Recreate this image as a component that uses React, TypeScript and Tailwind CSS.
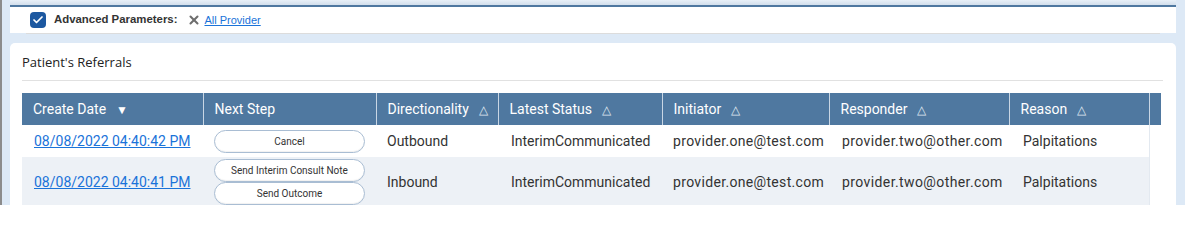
import { Check, X } from 'lucide-react'

const columns = [
  { label: 'Create Date', sort: '▼', width: 181 },
  { label: 'Next Step', sort: '', width: 173 },
  { label: 'Directionality', sort: '△', width: 122 },
  { label: 'Latest Status', sort: '△', width: 164 },
  { label: 'Initiator', sort: '△', width: 167 },
  { label: 'Responder', sort: '△', width: 180 },
  { label: 'Reason', sort: '△', width: 140 },
]

const rows = [
  {
    date: '08/08/2022 04:40:42 PM',
    actions: ['Cancel'],
    direction: 'Outbound',
    status: 'InterimCommunicated',
    initiator: 'provider.one@test.com',
    responder: 'provider.two@other.com',
    reason: 'Palpitations',
  },
  {
    date: '08/08/2022 04:40:41 PM',
    actions: ['Send Interim Consult Note', 'Send Outcome'],
    direction: 'Inbound',
    status: 'InterimCommunicated',
    initiator: 'provider.one@test.com',
    responder: 'provider.two@other.com',
    reason: 'Palpitations',
  },
]

function ActionButton({ label }: { label: string }) {
  return (
    <button className="w-[151px] h-[23px] rounded-full border border-[#a9bdd3] bg-white text-[10px] text-[#333] shadow-[inset_0_-1px_1px_rgba(0,0,0,0.06)]">
      {label}
    </button>
  )
}

export default function App() {
  return (
    <div className="w-[1185px] h-[205px] overflow-hidden bg-[#dde9f6] border-l-2 border-[#8c8c8c] font-['Roboto',sans-serif]">
      <div className="ml-[8px] w-[1166px]">
        {/* Advanced parameters bar */}
        <div className="h-[5px] bg-gradient-to-b from-[#e9f0f8] to-[#d2dfec]" />
        <div className="bg-white border-t-2 border-[#4f78a0] h-[28px] flex items-center pl-[20px] font-['Liberation_Sans',Arial,sans-serif]">
          <span className="w-4 h-4 rounded-[4px] bg-[#1c58a0] flex items-center justify-center">
            <Check className="w-3 h-3 text-white" strokeWidth={3.5} />
          </span>
          <span className="ml-[8px] text-[11.4px] font-bold text-[#333]">Advanced Parameters:</span>
          <X className="ml-[10px] w-[14px] h-[14px] text-[#6e6e6e]" strokeWidth={3.5} />
          <a className="ml-[3px] text-[11px] text-[#1a73d9] underline" href="#">
            All Provider
          </a>
        </div>
        <div className="h-[1px] mx-[16px] bg-[#dcdcdc]" />

        {/* Referrals card */}
        <div className="mt-[9px] bg-white rounded-[5px] pl-[12px] pr-[15px] pb-2">
          <div className="h-[37px] flex items-end pb-[8px] text-[13px] text-[#222] font-['Open_Sans',sans-serif]">
            Patient's Referrals
          </div>
          <div className="h-[1px] bg-[#e1e1e1] mr-[-2px]" />
          <table className="mt-[12px] table-fixed border-collapse w-[1139px] text-[14px]">
            <colgroup>
              {columns.map((c) => (
                <col key={c.label} style={{ width: c.width }} />
              ))}
              <col style={{ width: 12 }} />
            </colgroup>
            <thead>
              <tr className="h-[32px] bg-[#4f78a0] text-white">
                {columns.map((c) => (
                  <th
                    key={c.label}
                    className="text-left font-normal pl-[11px] border-r border-[#c9d6e4] whitespace-nowrap"
                  >
                    {c.label}
                    {c.sort && (
                      <span className={c.sort === '▼' ? 'ml-[10px] text-[12px]' : 'ml-[10px] text-[12px] text-[#dfe7f0]'}>
                        {c.sort}
                      </span>
                    )}
                  </th>
                ))}
                <th />
              </tr>
            </thead>
            <tbody className="text-[#333]">
              {rows.map((r, i) => (
                <tr key={r.date} className={i % 2 === 0 ? 'h-[32px] bg-white' : 'h-[50px] bg-[#edf1f6]'}>
                  <td className="pl-[12px] pt-[1px]">
                    <a href="#" className="text-[#1a73d9] underline">
                      {r.date}
                    </a>
                  </td>
                  <td className="pl-[11px] py-[1px]">
                    <div className="flex flex-col">
                      {r.actions.map((a) => (
                        <ActionButton key={a} label={a} />
                      ))}
                    </div>
                  </td>
                  <td className="pl-[11px] pt-[1px]">{r.direction}</td>
                  <td className="pl-[13px] pt-[1px]">{r.status}</td>
                  <td className="pl-[11px] pt-[1px] tracking-[0.33px]">{r.initiator}</td>
                  <td className="pl-[13px] pt-[1px] tracking-[0.4px]">{r.responder}</td>
                  <td className="pl-[14px] pt-[1px]">{r.reason}</td>
                  <td className="border-l border-[#e3e9f0] bg-white" />
                </tr>
              ))}
            </tbody>
          </table>
        </div>
      </div>
    </div>
  )
}
